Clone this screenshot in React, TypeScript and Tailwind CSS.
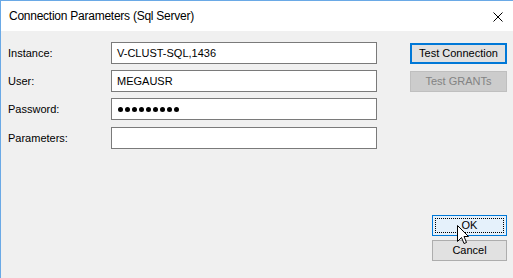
import React from "react";

const font = { fontFamily: '"Liberation Sans", Arial, sans-serif' };

function Row({ label, children }: { label: string; children?: React.ReactNode }) {
  return (
    <div className="flex items-center">
      <div className="w-[103px] text-[11px] text-black">{label}</div>
      <div className="w-[266px] h-[22px] border border-[#7a7a7a] bg-white flex items-center pl-[5px] text-[11px] text-black">
        {children}
      </div>
    </div>
  );
}

export default function App() {
  return (
    <div
      className="relative w-[513px] h-[278px] border-l border-t border-[#6aa9e6] bg-[#f0f0f0] flex flex-col overflow-hidden"
      style={font}
    >
      <div className="h-[30px] bg-white flex items-center justify-between pl-[8px] pr-[10px] shrink-0">
        <span className="text-[12px] tracking-[-0.25px] text-black">Connection Parameters (Sql Server)</span>
        <svg width="10" height="10" viewBox="0 0 10 10" className="mt-[1px]">
          <path d="M0.5 0.5 L9.5 9.5 M9.5 0.5 L0.5 9.5" stroke="#000" strokeWidth="1" />
        </svg>
      </div>
      <div className="flex-1 flex pl-[7px] pr-[6px] pt-[11px] pb-[17px]">
        <div className="flex flex-col gap-[6px]">
          <Row label="Instance:">V-CLUST-SQL,1436</Row>
          <Row label="User:">MEGAUSR</Row>
          <Row label="Password:">
            <div className="flex gap-[2px] pl-[1px]">
              {Array.from({ length: 9 }).map((_, i) => (
                <span key={i} className="w-[5px] h-[5px] rounded-full bg-black" />
              ))}
            </div>
          </Row>
          <div className="mt-[1px]">
            <Row label="Parameters:" />
          </div>
        </div>
        <div className="ml-auto flex flex-col items-end justify-between">
          <div className="flex flex-col gap-[7px] mt-[1px]">
            <div className="w-[97px] h-[21px] border-2 border-[#0078d7] bg-[#e1e1e1] flex items-center justify-center text-[11px] text-black">
              Test Connection
            </div>
            <div className="w-[97px] h-[21px] border border-[#bfbfbf] bg-[#cccccc] flex items-center justify-center text-[11px] text-[#838383]">
              Test GRANTs
            </div>
          </div>
          <div className="flex flex-col gap-[4px]">
            <div className="w-[75px] h-[21px] border border-[#0078d7] bg-[#e5f1fb] p-[2px]">
              <div className="w-full h-full border border-dotted border-black flex items-center justify-center text-[11px] text-black">
                OK
              </div>
            </div>
            <div className="w-[75px] h-[21px] border border-[#adadad] bg-[#e1e1e1] flex items-center justify-center text-[11px] text-black">
              Cancel
            </div>
          </div>
        </div>
      </div>
      <svg
        className="absolute left-[456px] top-[224px]"
        width="13"
        height="20"
        viewBox="0 0 13 20"
      >
        <path
          d="M0.5 0.5 L0.5 16.5 L4.5 12.5 L7 18.5 L9.5 17.5 L7 11.5 L11.5 11.5 Z"
          fill="#fff"
          stroke="#000"
          strokeWidth="1"
          strokeLinejoin="miter"
        />
      </svg>
    </div>
  );
}
